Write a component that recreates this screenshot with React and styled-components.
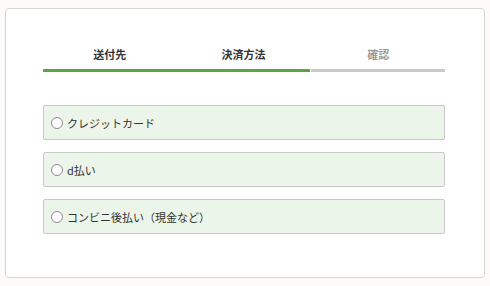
import React from "react";
import styled, { createGlobalStyle } from "styled-components";

const Global = createGlobalStyle`
  html, body { margin: 0; padding: 0; background: #fcfbf9; }
  body { font-family: "Noto Sans CJK JP", "Noto Sans", sans-serif; color: #333; }
`;

const Page = styled.div`
  padding: 8px 5px 8px 5px;
`;

const Card = styled.div`
  box-sizing: border-box;
  width: 480px;
  height: 270px;
  background: #fff;
  border: 1px solid #d6d6d6;
  border-radius: 4px;
  padding: 37px 39px 0 37px;
`;

const Steps = styled.div`
  display: flex;
  gap: 1px;
`;

const Step = styled.div`
  flex: 1;
  text-align: center;
  font-size: 11px;
  font-weight: 700;
  line-height: 16px;
  padding-bottom: 7px;
  color: ${(p) => (p.$done ? "#333" : "#999")};
  border-bottom: 3px solid ${(p) => (p.$done ? "#5aa63a" : "#c8c8c8")};
  margin-right: ${(p) => (p.$joined ? "-1px" : "0")};
  position: relative;
  z-index: ${(p) => (p.$joined ? 1 : 0)};
`;

const Options = styled.div`
  margin-top: 33px;
  display: flex;
  flex-direction: column;
  gap: 12px;
`;

const Option = styled.label`
  box-sizing: border-box;
  height: 35px;
  display: flex;
  align-items: center;
  gap: 4px;
  padding-left: 7px;
  background: #ebf5e9;
  border: 1px solid #c8c8c8;
  border-radius: 2px;
  font-size: 11px;
  color: #333;
  cursor: pointer;
`;

const Radio = styled.span`
  box-sizing: border-box;
  width: 12px;
  height: 12px;
  border-radius: 50%;
  border: 1px solid #8a8a8a;
  background: #fff;
  flex: none;
`;

const steps = [
  { label: "送付先", done: true, joined: true },
  { label: "決済方法", done: true },
  { label: "確認", done: false },
];

const methods = ["クレジットカード", "d払い", "コンビニ後払い（現金など）"];

export default function App() {
  return (
    <>
      <Global />
      <Page>
        <Card>
          <Steps>
            {steps.map((s) => (
              <Step key={s.label} $done={s.done} $joined={s.joined}>
                {s.label}
              </Step>
            ))}
          </Steps>
          <Options>
            {methods.map((m) => (
              <Option key={m}>
                <Radio />
                {m}
              </Option>
            ))}
          </Options>
        </Card>
      </Page>
    </>
  );
}
